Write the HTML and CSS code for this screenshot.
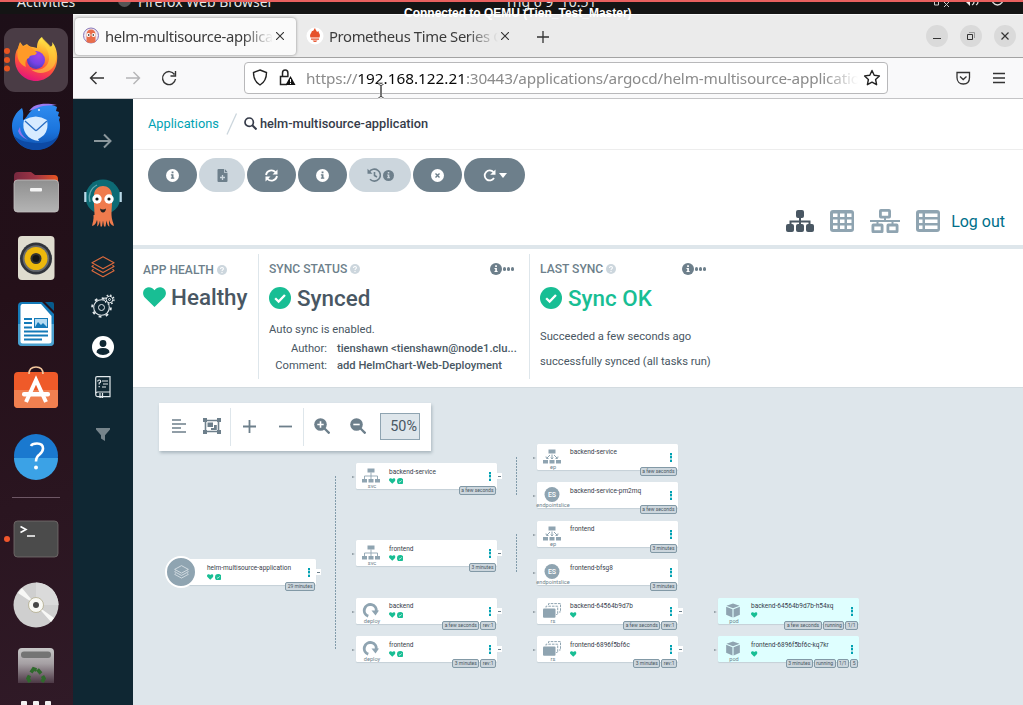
FILE: index.html
```html
<!DOCTYPE html>
<html lang="en">
<head>
<meta charset="utf-8">
<title>helm-multisource-application</title>
<link rel="stylesheet" href="styles.css">
</head>
<body>
<svg class="defs" aria-hidden="true">
  <defs>
    <linearGradient id="gFox" x1=".7" y1="0" x2=".35" y2="1"><stop offset="0" stop-color="#fff44f"/><stop offset=".35" stop-color="#ffa52a"/><stop offset=".65" stop-color="#ff4f3d"/><stop offset="1" stop-color="#e3127e"/></linearGradient>
    <radialGradient id="gGlobe" cx=".65" cy=".25" r=".8"><stop offset="0" stop-color="#a244e8"/><stop offset=".6" stop-color="#7542e5"/><stop offset="1" stop-color="#4a3bb0"/></radialGradient>
    <linearGradient id="gBird" x1="0" y1="0" x2="0" y2="1"><stop offset="0" stop-color="#2f8df0"/><stop offset=".6" stop-color="#1a73dc"/><stop offset="1" stop-color="#0f4ea8"/></linearGradient>
    <linearGradient id="gFolder" x1="0" y1="0" x2="1" y2="0"><stop offset="0" stop-color="#77283f"/><stop offset=".5" stop-color="#a03545"/><stop offset="1" stop-color="#e95420"/></linearGradient>
    <linearGradient id="gGray" x1="0" y1="0" x2="0" y2="1"><stop offset="0" stop-color="#8f8f8f"/><stop offset="1" stop-color="#b4b4b4"/></linearGradient>
    <linearGradient id="gTrash" x1="0" y1="0" x2="0" y2="1"><stop offset="0" stop-color="#c8c8c8"/><stop offset=".45" stop-color="#a59fa3"/><stop offset="1" stop-color="#4c3845"/></linearGradient>
    <symbol id="info" viewBox="0 0 16 16"><circle cx="8" cy="8" r="8" fill="currentColor"/><path d="M6.900 3h2.300v2.200H6.900zM6 6.500h3.200v4h1V12H6v-1.500h1V8H6z"/></symbol>
    <symbol id="help" viewBox="0 0 16 16"><circle cx="8" cy="8" r="8" fill="currentColor"/><path d="M5.700 6.200C5.700 3.300 10.300 3.500 10.300 6.200 10.300 7.700 8 7.800 8 9.500" fill="none" stroke="#fff" stroke-width="1.700"/><circle cx="8" cy="12" r="1.100" fill="#fff"/></symbol>
    <symbol id="check" viewBox="0 0 16 16"><circle cx="8" cy="8" r="8" fill="#18be94"/><path d="M4.500 8.200l2.500 2.400 4.600-4.800" fill="none" stroke="#fff" stroke-width="1.700"/></symbol>
    <symbol id="heart" viewBox="0 0 16 14"><path d="M8 14L1.200 7.300C-.7 5.200-.2 2 1.800.8 4-.6 6.500.3 8 2.200 9.500.3 12-.6 14.200.8c2 1.200 2.500 4.400.6 6.500z" fill="#18be94"/></symbol>
    <symbol id="stack" viewBox="0 0 24 22"><g fill="none" stroke="currentColor" stroke-width="1.200" stroke-linejoin="round"><path d="M12 .8l11 6-11 6-11-6z"/><path d="M2.500 9.200L1 10.500l11 6 11-6-1.500-1.300M2.500 13.200L1 14.700l11 6 11-6-1.500-1.500"/></g></symbol>
    <symbol id="svc" viewBox="0 0 18 14"><path d="M5.500 0h7v4h-7zM0 10.500h5V14H0zM6.500 10.500h5V14h-5zM13 10.500h5V14h-5z" fill="#8fa4b1"/><path d="M9 4v6.500M2.500 10.500V7.500h13v3" fill="none" stroke="#8fa4b1" stroke-width=".9"/></symbol>
    <symbol id="ep" viewBox="0 0 18 14"><path d="M5.500 0h7v4h-7zM0 10.500h5V14H0zM6.500 10.500h5V14h-5zM13 10.500h5V14h-5z" fill="#8fa4b1"/><path d="M9 5v4M7 5.500L4 8.500M11 5.500l3 3M3 7l.5 2h2M15 7l-.5 2h-2M7.800 8L9 9.500 10.200 8" fill="none" stroke="#8fa4b1" stroke-width="1"/></symbol>
    <symbol id="deploy" viewBox="0 0 18 15"><path d="M6.300 13.200A6 6 0 1 1 14.200 8.500" fill="none" stroke="#8fa4b1" stroke-width="2.900"/><path d="M9.500 7.500h7.500l-3.500 5z" fill="#8fa4b1"/></symbol>
    <symbol id="rs" viewBox="0 0 18 15"><rect x="0" y="5.500" width="12.500" height="9.200" rx="1" fill="#8fa4b1"/><path d="M3 4.500V3.200h11.700v8.300h-1.500M5.500 2V.6h12v8.400h-1.500" fill="none" stroke="#8fa4b1" stroke-width="1" stroke-dasharray="2.600 1"/></symbol>
    <symbol id="pod" viewBox="0 0 16 16"><path d="M8 .5l7 2.400L8 5.500 1 2.900zM.7 4l6.700 2.600v8.900L.7 12.600zM15.300 4L8.600 6.600v8.900l6.700-2.900z" fill="#8fa4b1"/></symbol>
    <symbol id="es" viewBox="0 0 16 16"><circle cx="8" cy="8" r="8" fill="#8fa4b1"/><text x="8" y="10.600" text-anchor="middle" font-size="7.500" font-family="Roboto" font-weight="500" fill="#fff">ES</text></symbol>
    <symbol id="argo" viewBox="0 0 38 48"><circle cx="19" cy="18" r="17.500" fill="#0d6b75"/><path d="M6 23A14 14 0 0 1 13 6" fill="none" stroke="#65a7b0" stroke-width="1.300"/><path d="M1.300 13v10M36.700 13v10" stroke="#b9d9e8" stroke-width="2.200"/><path d="M10.500 36c0-7-1-12-.5-20C10.500 4 27.500 4 28 16c.5 8-.5 13-.5 20 0 4 2 8 2.500 11-3-.5-4-3-5-6 0 2 0 4 .5 6.500-2-.5-2.500-3.500-3-6l-1 6h-1.500l-1-6-1 6-1.500 0-.5-6c-.5 2-1 5-3 6 .5-3 .5-5 0-6.500-1 3-2 5.500-5 6 .5-3 2-7 1.500-11z" fill="#ef7b4d"/><circle cx="13" cy="20" r="4.700" fill="#fff"/><circle cx="25" cy="20" r="4.700" fill="#fff"/><circle cx="13" cy="20" r="1.600" fill="#111"/><circle cx="25" cy="20" r="1.600" fill="#111"/><path d="M16 29.500q3 2 6 0-.5 4-3 4t-3-4z" fill="#222"/></symbol>
  </defs>
</svg>

<div class="screen">
  <header class="topbar">
    <span class="topbar-activities">Activities</span>
    <i class="topbar-dot"></i>
    <span class="topbar-app">Firefox Web Browser</span>
    <span class="topbar-clock">Thg 6 9&nbsp;&nbsp;10:51</span>
    <svg class="topbar-tray" viewBox="930 2 80 12"><path d="M934.500 1v4h4V1M944 2l5 5M949 2l-5 5" fill="none" stroke="#ccc"/><path d="M963 2h3l4 4V2z" fill="#eee"/><path d="M972 5q2-1 2-3M976 5q2-1 2-3M992.500 2q5 6 10 0" fill="none" stroke="#ddd" stroke-width="1.300"/></svg>
  </header>
  <div class="vm-banner">Connected to QEMU (Tien_Test_Master)</div>

  <div class="desktop">
    <nav class="dock">
      <svg class="slot" viewBox="4 27 64 66"><rect x="4" y="28" width="64" height="64" rx="11" fill="#4a3c45"/><g fill="#e95420"><circle cx="7" cy="51" r="3"/><circle cx="7" cy="60" r="3"/><circle cx="7" cy="68.500" r="3"/></g>
        <path d="M20 42l3 4 4-2c1 1 3 3 6 3l4 1c0-6 2-9 5-11 1 4 5 5 8 10 2-1 3-2 2-5 4 4 6 12 5 19-1 11-10 20-21 20S15 72 15 60c0-6 1-9 3-12z" fill="url(#gFox)"/><circle cx="36" cy="60" r="9" fill="url(#gGlobe)"/><path d="M20 43l3 4 4-2 6 4 4 4-2 2c-4 0-6 1-6 3-4 1-4 6-3 9-7-3-11-10-7-22z" fill="#ff9a28"/><path d="M42 37.500c0 8 8 12 7 22-1 8-9 12-18 10 8 7 24 3 25-10 1-9-7-15-14-22z" fill="#ffd43d" opacity=".6"/></svg>
      <svg class="slot" viewBox="4 93 64 66"><path d="M22 108c-6 4-10 11-10 18 0 14 10 24 24 24 13 0 24-10 24-23 0-3 0-5-1-7l1-3-2-1 1-4-3-1 1-4c-8-4-20-4-26 4-4 4-5 8-8 9 0-4 1-7-1-12z" fill="url(#gBird)"/><path d="M14 136c4 9 13 14 22 14 10 0 19-5 23-15-5 6-12 8-20 8-11 0-19-2-25-7z" fill="#0d4aa5"/><path d="M24 120q12-7 23 0 2 9-3 15-5 4-6 4l1 2q-9-1-13-7-4-6-2-14z" fill="#d7ebff"/><path d="M25 121l10 9q1 1 2 0l10-9" fill="none" stroke="#2a6fc4" stroke-width="1.300"/><path d="M29 111c4-7 15-9 28-6l-9 .5c-7 0-11 3-19 5.500z" fill="#9c7bf0"/><path d="M20 127q0 8 8 13-8-3-10-9z" fill="#8f74ea"/><circle cx="39" cy="110" r=".9" fill="#fff"/></svg>
      <svg class="slot" viewBox="4 159 64 66"><path d="M14 176q0-4 4-4h13l4 3h19q4 0 4 4v6H14z" fill="url(#gFolder)"/><rect x="14" y="180" width="44.500" height="32" rx="3.500" fill="url(#gGray)" stroke="#c4c0c0" stroke-width=".8"/><rect x="30" y="188" width="12" height="3.500" rx="1" fill="#f4f4f4"/></svg>
      <svg class="slot" viewBox="4 225 64 66"><rect x="18" y="236" width="36.500" height="44" rx="4" fill="#dfdccf"/><circle cx="36" cy="258.500" r="16" fill="#31343b"/><circle cx="36" cy="258.500" r="13.300" fill="#666a70"/><circle cx="36" cy="258.500" r="11.500" fill="#edb80d"/><circle cx="36" cy="258.500" r="5.500" fill="#333"/><circle cx="36" cy="258.500" r="3.500" fill="#151515"/></svg>
      <svg class="slot" viewBox="4 291 64 66"><path d="M22 302h20l12 12v28q0 4-4 4H22q-4 0-4-4v-36q0-4 4-4z" fill="#147ab8"/><path d="M18 324h36v18q0 4-4 4H22q-4 0-4-4z" fill="#4ba1cf"/><path d="M22 304h19l10.500 12v25q0 2.500-2.500 2.500H22.500q-2 0-2-2v-35q0-2 1.500-2.500z" fill="#fff"/><path d="M45 302h7q2 0 2 2v7z" fill="#075a8c"/><path d="M24 319h8M24 323h8M24 327.500h8M24 331.500h24M24 335.500h24M24 339.500h18" stroke="#147ab8" stroke-width="2"/><rect x="34.500" y="318.500" width="13" height="9" fill="#b5dcf2" stroke="#147ab8"/><path d="M35 327l3-5 3 3 2-2 4 4z" fill="#147ab8"/></svg>
      <svg class="slot" viewBox="4 357 64 66"><rect x="14" y="372" width="44" height="36" rx="4" fill="#ef5a29"/><path d="M14 390h44v14q0 4-4 4H18q-4 0-4-4z" fill="#f08050"/><path d="M29 374q0-7 7-7t7 7" fill="none" stroke="#f4c79d" stroke-width="1.700"/><path d="M26 402l10-22 10 22" fill="none" stroke="#fff" stroke-width="4"/><rect x="22" y="392" width="28" height="4.500" rx="2" fill="#fff"/></svg>
      <svg class="slot" viewBox="4 423 64 66"><circle cx="36" cy="456" r="22" fill="#1a79cf"/><path d="M14 458a22 22 0 0 0 44 0z" fill="#3ba2e6"/><path d="M31 446q1-2.500 6-2.500 6 0 6 5 0 3-3.500 6-3.500 2.500-3.500 7" fill="none" stroke="#fff" stroke-width="2.600"/><circle cx="36" cy="467.500" r="2" fill="#fff"/></svg>
      <hr class="dock-divider">
      <svg class="slot" viewBox="4 506 64 66"><circle cx="7" cy="539" r="3" fill="#f0562c"/><rect x="14" y="521" width="44" height="36" rx="3.500" fill="#4b4b4b" stroke="#77706f" stroke-width=".8"/><path d="M20.500 526.500l5.500 3-5.500 3M27 536h8" fill="none" stroke="#fff" stroke-width="1.600"/></svg>
      <svg class="slot" viewBox="4 572 64 66"><circle cx="36" cy="605" r="22.500" fill="#cfcfcf"/><path d="M36 605V582.500a22.500 22.500 0 0 1 22.500 22.500z" fill="#dadada"/><path d="M36 605l-18-12 4-5zM36 605l18 13-3 4z" fill="#f8f8f6"/><circle cx="36" cy="605" r="7.500" fill="#f8f8f4" stroke="#aaa380" stroke-width=".7"/><circle cx="36" cy="605" r="3" fill="#464646"/></svg>
      <svg class="slot slot-trash" viewBox="4 638 64 63"><path d="M18 683v-31q0-4 4-4h28q4 0 4 4v31z" fill="url(#gTrash)"/><rect x="21" y="651.500" width="30" height="6.500" rx="3" fill="#747474"/><g fill="none" stroke="#2f6a2c" stroke-width="3.600"><path d="M31 672.500l2.500-3.500 3 1M37.500 669.500l3.500 4M29.500 675.500l-1.500 3 2 3.500M42.500 676l1.500 2.500-2 3.500"/></g></svg>
      <div class="dock-apps"><i></i><i></i><i></i></div>
    </nav>

    <main class="browser">
      <div class="tabs">
        <div class="tab tab-active">
          <svg class="favicon" viewBox="0 0 18 18"><circle cx="9" cy="8.500" r="7.500" fill="#eee7f2" stroke="#8a78b8"/><path d="M4.500 15V8q0-5.500 4.500-5.500T13.500 8v7q-4.500 2-9 0z" fill="#e96d4b"/><circle cx="6.500" cy="8" r="2" fill="#fff"/><circle cx="11.500" cy="8" r="2" fill="#fff"/><circle cx="6.700" cy="8" r=".8"/><circle cx="11.300" cy="8" r=".8"/></svg>
          <span class="tab-title">helm-multisource-application</span>
          <svg class="tab-close" viewBox="0 0 8 8"><path d="M0 0l8 8M8 0L0 8" stroke="#333" stroke-width="1.100"/></svg>
        </div>
        <div class="tab tab-idle">
          <svg class="favicon" viewBox="0 0 18 18"><circle cx="9" cy="9" r="8.500" fill="#fff"/><path d="M4.500 10.500C3 7 6 6 5.800 4 8 4.500 7.500 2.500 9 1c.5 2 1.500 2.500 2 4l1.500-1c0 2.500 2.500 3 1 6.500zM5 11.500h8v1.300H5zM6.500 13.500h5q-2.500 3-5 0z" fill="#e6522c"/></svg>
          <span class="tab-title">Prometheus Time Series Collection</span>
          <svg class="tab-close" viewBox="0 0 8 8"><path d="M0 0l8 8M8 0L0 8" stroke="#333" stroke-width="1.100"/></svg>
        </div>
        <svg class="tab-new" viewBox="0 0 12 12"><path d="M6 0v12M0 6h12" stroke="#333" stroke-width="1.300"/></svg>
        <div class="window-buttons">
          <svg viewBox="0 0 22 22"><circle cx="11" cy="11" r="11" fill="#dadada"/><path d="M7 13.500h8" stroke="#333"/></svg>
          <svg viewBox="0 0 22 22"><circle cx="11" cy="11" r="11" fill="#dadada"/><path d="M7.500 9.500h5v5h-5z" fill="none" stroke="#333"/><path d="M9 7.500h5.500V13" fill="none" stroke="#999"/></svg>
          <svg viewBox="0 0 22 22"><circle cx="11" cy="11" r="11" fill="#dadada"/><path d="M7.500 7.500l7 7M14.500 7.500l-7 7" stroke="#333" stroke-width="1.200"/></svg>
        </div>
      </div>

      <div class="navbar">
        <svg class="nav-icons" viewBox="88 70 92 18"><g fill="none" stroke="#333" stroke-width="1.400"><path d="M104 79H91M96.500 73L90.500 79l6 6"/><path d="M126 79h13M133.500 73l6 6-6 6" stroke="#b4b4b6"/><path d="M174.500 75.500a6.500 6.500 0 1 0 1 4.500M175.500 72v5h-5"/></g></svg>
        <div class="urlbar">
          <svg class="url-icons" viewBox="252 69 46 20"><path d="M260 71l6.500 2.500c0 6-1.500 9.500-6.500 12.500-5-3-6.500-6.500-6.500-12.500z" fill="none" stroke="#222" stroke-width="1.400"/><path d="M287 85.500h-6.500v-8h8M282.500 77.500V74q0-3 2.700-3t2.700 3v3.500" fill="none" stroke="#222" stroke-width="1.500"/><path d="M290.500 77l5 9h-10z" fill="#111"/><path d="M290.500 80v3.200M290.500 84v1" stroke="#fff"/></svg>
          <span class="url">https://<b>192.168.122.21</b>:30443/applications/argocd/helm-multisource-applications</span>
          <svg class="url-star" viewBox="0 0 18 18"><path d="M9 1.500l2.200 4.800 5.200.6-3.800 3.600 1 5.200L9 13.200l-4.600 2.500 1-5.200L1.600 6.900l5.200-.6z" fill="none" stroke="#222" stroke-width="1.400" stroke-linejoin="round"/></svg>
        </div>
        <svg class="nav-right" viewBox="955 70 52 16"><g fill="none" stroke="#333" stroke-width="1.300"><path d="M957 72.500h12.500v5c0 4-2.500 6.500-6.200 6.500s-6.300-2.500-6.300-6.500z"/><path d="M960 76.500l3.200 3 3.300-3M993 73.500h12M993 78h12M993 82.500h12"/></g></svg>
      </div>

      <div class="app">
        <aside class="sidebar">
          <svg class="side-arrow" viewBox="0 0 20 16"><path d="M1 8h16M11 1.500L17.500 8 11 14.500" fill="none" stroke="#8b979c" stroke-width="2"/></svg>
          <svg class="side-logo"><use href="#argo"/></svg>
          <svg class="side-icon side-apps"><use href="#stack"/></svg>
          <svg class="side-icon side-gear" viewBox="0 0 24 24"><g fill="none" stroke="#e3e9ec"><circle cx="10.500" cy="13.500" r="7.800" stroke-width="1.100"/><circle cx="10.500" cy="13.500" r="3"/><circle cx="10.500" cy="13.500" r="9.300" stroke-width="2" stroke-dasharray="2.800 4.500"/><circle cx="18.500" cy="5.500" r="4.800" fill="#0f2733" stroke="none"/><circle cx="18.500" cy="5.500" r="3.300"/><circle cx="18.500" cy="5.500" r="1"/><circle cx="18.500" cy="5.500" r="4.500" stroke-width="1.300" stroke-dasharray="1.700 1.830"/></g></svg>
          <svg class="side-icon side-user" viewBox="0 0 22 22"><circle cx="11" cy="11" r="11" fill="#fff"/><circle cx="11" cy="7.500" r="3.400" fill="#0f2733"/><path d="M4.500 16.500q0-4.500 6.500-4.500t6.500 4.500q-6.500 5-13 0z" fill="#0f2733"/></svg>
          <svg class="side-icon side-docs" viewBox="0 0 16 22"><g fill="none" stroke="#e3e9ec" stroke-width="1.200"><path d="M.7 18V2Q.7.700 2 .700h13v20H3q-2.300 0-2.300-2.400T3 16h12"/><path d="M2.700 5.500q0-1.500 1.500-1.500T5.700 5.500Q5.700 6.500 4.200 7v1.500M4.200 10v1.200M7 5h6M8 8h5M7 11h4M5 17v4.500l1.300-1 1.200 1V17"/></g></svg>
          <svg class="side-icon side-filter" viewBox="0 0 14 13"><path d="M0 0h14v1.500L9 7.300V13l-4-2.500V7.300L0 1.500z" fill="#76848b"/></svg>
        </aside>

        <section class="content">
          <div class="breadcrumb">
            <a>Applications</a>
            <svg class="crumb-slash" viewBox="0 0 12 22"><path d="M1 21.500L10.500.5" stroke="#ccd6dd" stroke-width="1.300"/></svg>
            <svg class="crumb-search" viewBox="0 0 13 13"><circle cx="5.200" cy="5.200" r="4.200" fill="none" stroke="#363c4a" stroke-width="1.700"/><path d="M8.300 8.300l4.200 4.200" stroke="#363c4a" stroke-width="2"/></svg>
            <span>helm-multisource-application</span>
          </div>

          <div class="actions">
            <button class="pill"><svg class="i13"><use href="#info"/></svg></button>
            <button class="pill pill-off pill-file"><svg class="i13" viewBox="0 0 13 13"><path d="M1.500 1q0-1 1-1H8v3.700h3.500V12q0 1-1 1h-8q-1 0-1-1zM8.800 0l2.700 2.900H8.800z" fill="currentColor"/><path d="M4 8.500h5M6.500 6v5" stroke="#ccd6dd" stroke-width="1.300"/></svg></button>
            <button class="pill"><svg class="i13" viewBox="0 0 13 13"><path d="M1 6A5.500 5.500 0 0 1 10.500 3.200M12 7a5.500 5.500 0 0 1-9.500 2.800" fill="none" stroke="#fff" stroke-width="1.800"/><path d="M12.500.5v5h-5zM.5 12.500v-5h5z" fill="#fff"/></svg></button>
            <button class="pill"><svg class="i13"><use href="#info"/></svg></button>
            <button class="pill pill-off pill-history"><svg class="i14" viewBox="0 0 14 14"><path d="M2.200 4A6 6 0 1 1 3 11.300M7.500 4v3.500l2.500 1.500" fill="none" stroke="currentColor" stroke-width="1.600"/><path d="M.5.8v5h5z" fill="currentColor"/></svg><svg class="i11"><use href="#info"/></svg></button>
            <button class="pill"><svg class="i13" viewBox="0 0 13 13"><circle cx="6.500" cy="6.500" r="6.500" fill="#fff"/><path d="M4.500 4.500l4 4M8.500 4.500l-4 4" stroke="#6d7f8b" stroke-width="1.400"/></svg></button>
            <button class="pill pill-refresh"><svg class="i13" viewBox="0 0 13 13"><path d="M10.500 3.200A5 5 0 1 0 11 9" fill="none" stroke="#fff" stroke-width="1.800"/><path d="M12.500.5v5.300H7.200z" fill="#fff"/></svg><i class="caret"></i></button>
          </div>

          <div class="views">
            <svg class="view-tree" viewBox="0 0 28 22"><g fill="#495763"><rect x="10" width="8" height="8" rx="2"/><rect x="0" y="14" width="8" height="8" rx="2"/><rect x="10" y="14" width="8" height="8" rx="2"/><rect x="20" y="14" width="8" height="8" rx="2"/></g><path d="M14 8v6M4.500 14v-2.500h19V14" fill="none" stroke="#495763" stroke-width="2"/></svg>
            <svg class="view-grid" viewBox="0 0 24 22"><rect width="24" height="22" rx="3" fill="#8fa4b1"/><path d="M3 3.500h4.500v3.500H3zM10 3.500h4.500v3.500H10zM17 3.500h4.500v3.500H17zM3 9.500h4.500v3.500H3zM10 9.500h4.500v3.500H10zM17 9.500h4.500v3.500H17zM3 15.500h4.500v3.500H3zM10 15.500h4.500v3.500H10zM17 15.500h4.500v3.500H17z" fill="#fff"/></svg>
            <svg class="view-net" viewBox="0 0 30 24"><g fill="none" stroke="#8fa4b1" stroke-width="2.800"><rect x="10.400" y="1.400" width="9.200" height="6.700" rx=".5"/><rect x="2.900" y="16" width="9.200" height="6.700" rx=".5"/><rect x="17.900" y="16" width="9.200" height="6.700" rx=".5"/></g><path d="M0 12h30M15 8v4M7.500 12v4M22.500 12v4" stroke="#8fa4b1" stroke-width="2"/></svg>
            <svg class="view-list" viewBox="0 0 24 22"><rect width="24" height="22" rx="3" fill="#8fa4b1"/><path d="M3 3.500h3.500v3.500H3zM9 3.500h12.500v3.500H9zM3 9.500h3.500v3.500H3zM9 9.500h12.500v3.500H9zM3 15.500h3.500v3.500H3zM9 15.500h12.500v3.500H9z" fill="#fff"/></svg>
            <a class="logout">Log out</a>
          </div>

          <div class="status">
            <div class="status-col status-health">
              <h6>APP HEALTH <svg class="i10"><use href="#help"/></svg></h6>
              <div class="big"><svg class="big-heart"><use href="#heart"/></svg><span>Healthy</span></div>
            </div>
            <div class="status-col status-sync">
              <h6>SYNC STATUS <svg class="i10"><use href="#help"/></svg><span class="more"><svg class="i12"><use href="#info"/></svg><i></i><i></i><i></i></span></h6>
              <div class="big"><svg class="big-check"><use href="#check"/></svg><span>Synced</span></div>
              <p class="auto">Auto sync is enabled.</p>
              <dl><dt>Author:</dt><dd>tienshawn &lt;tienshawn@node1.clu...</dd><dt>Comment:</dt><dd>add HelmChart-Web-Deployment</dd></dl>
            </div>
            <div class="status-col status-last">
              <h6>LAST SYNC <svg class="i10"><use href="#help"/></svg><span class="more"><svg class="i12"><use href="#info"/></svg><i></i><i></i><i></i></span></h6>
              <div class="big big-ok"><svg class="big-check"><use href="#check"/></svg><span>Sync OK</span></div>
              <p class="when">Succeeded a few seconds ago</p>
              <p class="msg">successfully synced (all tasks run)</p>
            </div>
          </div>

          <div class="graph">
            <div class="graph-tools">
              <div class="tool-group tool-layout">
                <svg class="i14" viewBox="0 0 14 14"><path d="M0 1h9M0 5h14M0 9h9M0 13h14" stroke="#6d7f8b" stroke-width="1.700"/></svg>
                <svg class="tool-fit" viewBox="0 0 18 16"><path d="M2.500 2.500h13v11h-13z" fill="none" stroke="#6d7f8b" stroke-width="1.600"/><path d="M0 0h4v4H0zM14 0h4v4h-4zM0 12h4v4H0zM14 12h4v4h-4zM4.500 4.500H10V9H4.500zM11 7h2.800v5H8v-2h3z" fill="#6d7f8b"/></svg>
              </div>
              <div class="tool-group tool-step">
                <svg class="i13" viewBox="0 0 13 13"><path d="M6.500 0v13M0 6.500h13" stroke="#6d7f8b" stroke-width="1.800"/></svg>
                <svg class="i13" viewBox="0 0 13 13"><path d="M0 6.500h13" stroke="#6d7f8b" stroke-width="1.800"/></svg>
              </div>
              <div class="tool-group tool-zoom">
                <svg class="i16" viewBox="0 0 16 16"><circle cx="6.500" cy="6.500" r="6.300" fill="#6d7f8b"/><path d="M10.500 10.500l5 5" stroke="#6d7f8b" stroke-width="2.300"/><path d="M3.300 6.500h6.400M6.500 3.300v6.400" stroke="#fff" stroke-width="1.600"/></svg>
                <svg class="i16" viewBox="0 0 16 16"><circle cx="6.500" cy="6.500" r="6.300" fill="#6d7f8b"/><path d="M10.500 10.500l5 5" stroke="#6d7f8b" stroke-width="2.300"/><path d="M3.300 6.500h6.400" stroke="#fff" stroke-width="1.600"/></svg>
                <span class="zoom-value">50%</span>
              </div>
            </div>

            <i class="wire wire-root"></i><i class="wire wire-backend"></i><i class="wire wire-frontend"></i>

            <div class="node node-root has-children">
              <div class="root-badge"><svg><use href="#stack"/></svg></div>
              <div class="node-text"><b>helm-multisource-application</b><span><svg class="h"><use href="#heart"/></svg><svg class="c"><use href="#check"/></svg></span></div>
              <div class="kebab"></div><div class="tags"><em>29 minutes</em></div>
            </div>

            <div class="node col-1 row-2 child has-children"><div class="kind"><svg><use href="#svc"/></svg><small>svc</small></div><div class="node-text"><b>backend-service</b><span><svg class="h"><use href="#heart"/></svg><svg class="c"><use href="#check"/></svg></span></div><div class="kebab"></div><div class="tags"><em>a few seconds</em></div></div>
            <div class="node col-1 row-5 child has-children"><div class="kind"><svg><use href="#svc"/></svg><small>svc</small></div><div class="node-text"><b>frontend</b><span><svg class="h"><use href="#heart"/></svg><svg class="c"><use href="#check"/></svg></span></div><div class="kebab"></div><div class="tags"><em>3 minutes</em></div></div>
            <div class="node col-1 row-7 child has-children"><div class="kind"><svg><use href="#deploy"/></svg><small>deploy</small></div><div class="node-text"><b>backend</b><span><svg class="h"><use href="#heart"/></svg><svg class="c"><use href="#check"/></svg></span></div><div class="kebab"></div><div class="tags"><em>a few seconds</em><em>rev:1</em></div></div>
            <div class="node col-1 row-8 child has-children"><div class="kind"><svg><use href="#deploy"/></svg><small>deploy</small></div><div class="node-text"><b>frontend</b><span><svg class="h"><use href="#heart"/></svg><svg class="c"><use href="#check"/></svg></span></div><div class="kebab"></div><div class="tags"><em>3 minutes</em><em>rev:1</em></div></div>

            <div class="node col-2 row-1 child"><div class="kind"><svg><use href="#ep"/></svg><small>ep</small></div><div class="node-text"><b>backend-service</b></div><div class="kebab"></div><div class="tags"><em>a few seconds</em></div></div>
            <div class="node col-2 row-3 child"><div class="kind"><svg><use href="#es"/></svg><small>endpointslice</small></div><div class="node-text"><b>backend-service-pm2mq</b></div><div class="kebab"></div><div class="tags"><em>a few seconds</em></div></div>
            <div class="node col-2 row-4 child"><div class="kind"><svg><use href="#ep"/></svg><small>ep</small></div><div class="node-text"><b>frontend</b></div><div class="kebab"></div><div class="tags"><em>3 minutes</em></div></div>
            <div class="node col-2 row-6 child"><div class="kind"><svg><use href="#es"/></svg><small>endpointslice</small></div><div class="node-text"><b>frontend-bfsg8</b></div><div class="kebab"></div><div class="tags"><em>3 minutes</em></div></div>
            <div class="node col-2 row-7 child has-children"><div class="kind"><svg><use href="#rs"/></svg><small>rs</small></div><div class="node-text"><b>backend-64564b9d7b</b><span><svg class="h"><use href="#heart"/></svg></span></div><div class="kebab"></div><div class="tags"><em>a few seconds</em><em>rev:1</em></div></div>
            <div class="node col-2 row-8 child has-children"><div class="kind"><svg><use href="#rs"/></svg><small>rs</small></div><div class="node-text"><b>frontend-6896f5bf6c</b><span><svg class="h"><use href="#heart"/></svg></span></div><div class="kebab"></div><div class="tags"><em>3 minutes</em><em>rev:1</em></div></div>

            <div class="node node-pod col-3 row-7 child"><div class="kind"><svg><use href="#pod"/></svg><small>pod</small></div><div class="node-text"><b>backend-64564b9d7b-h54xq</b><span><svg class="h"><use href="#heart"/></svg></span></div><div class="kebab"></div><div class="tags"><em>a few seconds</em><em>running</em><em>1/1</em></div></div>
            <div class="node node-pod col-3 row-8 child"><div class="kind"><svg><use href="#pod"/></svg><small>pod</small></div><div class="node-text"><b>frontend-6896f5bf6c-kq7kr</b><span><svg class="h"><use href="#heart"/></svg></span></div><div class="kebab"></div><div class="tags"><em>3 minutes</em><em>running</em><em>1/1</em><em>5</em></div></div>
          </div>
        </section>
      </div>
    </main>
  </div>
  <svg class="cursor" viewBox="0 0 8 16"><path d="M1.500 1.500q2.500 0 2.500 2v9q0 2-2.500 2M6.500 1.500Q4 1.500 4 3.500v9q0 2 2.500 2" fill="none" stroke="#fff" stroke-width="2.400"/><path d="M1.500 1.500q2.500 0 2.500 2v9q0 2-2.500 2M6.500 1.500Q4 1.500 4 3.500v9q0 2 2.500 2" fill="none" stroke="#444"/></svg>
</div>
</body>
</html>
```
FILE: styles.css
```css
* { box-sizing: border-box; }
body { margin: 0; font-family: Roboto, "Liberation Sans", sans-serif; }
svg { display: block; flex: none; }
p, h6, dl, dd { margin: 0; }
.defs { position: absolute; width: 0; height: 0; }
.screen { position: relative; width: 1023px; height: 705px; overflow: hidden; display: flex; flex-direction: column; }

/* System bar */
.topbar { height: 14px; flex: none; border-top: 2px solid #e9605f; background: #141414; color: #e6e6e6; overflow: hidden; display: flex; align-items: flex-start; font: 14px/16px "Noto Sans", sans-serif; padding-left: 17px; }
.topbar span, .topbar-dot { margin-top: -8px; white-space: nowrap; }
.topbar-activities { width: 101px; }
.topbar-dot { width: 13px; height: 13px; border-radius: 50%; background: #555; margin-right: 7px; }
.topbar-app { width: 367px; }
.topbar-clock { width: 425px; }
.topbar-tray { width: 80px; height: 12px; }
.vm-banner { position: absolute; z-index: 3; left: 404px; top: 6px; color: #fff; font: bold 12px/14px "Liberation Sans", sans-serif; white-space: nowrap; }

.desktop { flex: 1; display: flex; min-height: 0; }

/* Dock */
.dock { width: 73px; flex: none; padding: 13px 5px 0 4px; background: linear-gradient(165deg, #1d0f18, #241019 40%, #301a27); }
.slot { width: 64px; height: 66px; }
.slot-trash { height: 63px; }
.dock-divider { height: 1px; margin: 8px 8px; border: 0; background: #6e5765; }
.dock-apps { display: flex; gap: 6px; padding-left: 17px; }
.dock-apps i { width: 6px; height: 6px; background: #f4f2f2; border-radius: 1px; }

/* Browser chrome */
.browser { flex: 1; min-width: 0; display: flex; flex-direction: column; background: #fff; }
.tabs { height: 44px; flex: none; display: flex; align-items: flex-start; background: #ebebeb; border-top: 1px solid #fafafa; border-bottom: 1px solid #a3a3a3; }
.tab { height: 37px; margin-top: 3px; display: flex; align-items: center; color: #3c3c3c; font: 14.800px/20px "Noto Sans", sans-serif; letter-spacing: -.36px; }
.tab-active { width: 221px; margin-left: 2px; padding: 0 12px 0 7px; background: #fafafa; border-radius: 4px; box-shadow: 0 0 3px #888; }
.tab-idle { width: 224px; padding: 0 11px 0 10px; }
.favicon { width: 18px; height: 18px; margin-top: -2px; }
.tab-title { flex: 1; margin: -2px 3px 0 5px; overflow: hidden; white-space: nowrap; mask-image: linear-gradient(90deg, #000 82%, transparent); }
.tab-close { width: 8px; height: 8px; margin: -2px 0 0; }
.tab-new { width: 12px; height: 12px; margin: 16px 0 0 17px; }
.window-buttons { margin: 10px 7px 0 auto; display: flex; gap: 12px; }
.window-buttons svg { width: 22px; height: 22px; }
.navbar { height: 41px; flex: none; display: flex; align-items: center; background: #f9f9fa; border-bottom: 1px solid #c4c4c6; padding-left: 15px; }
.nav-icons { width: 92px; height: 18px; margin-right: 64px; }
.urlbar { width: 644px; height: 32px; display: flex; align-items: center; background: #fff; border: 1px solid #b8b8ba; border-radius: 4px; padding-left: 7px; font: 15.300px/22px "Noto Sans", sans-serif; color: #8b8b8b; }
.url-icons { width: 46px; height: 20px; margin-right: 8px; }
.url { width: 552px; overflow: hidden; white-space: nowrap; letter-spacing: -.17px; mask-image: linear-gradient(90deg, #000 94%, transparent); }
.url b { font-weight: 400; color: #080808; letter-spacing: 0; }
.url-star { width: 18px; height: 18px; margin-left: 5px; }
.nav-right { width: 52px; height: 16px; margin-left: 67px; }
.cursor { position: absolute; left: 377px; top: 83px; width: 8px; height: 16px; z-index: 3; }

/* Argo sidebar */
.app { flex: 1; min-height: 0; display: flex; }
.sidebar { width: 60px; flex: none; background: #0f2733; display: flex; flex-direction: column; align-items: center; }
.side-arrow { width: 20px; height: 16px; margin-top: 34px; }
.side-logo { width: 38px; height: 48px; margin-top: 30px; }
.side-apps { width: 24px; height: 22px; color: #dc6a3d; margin-top: 29px; }
.side-gear { width: 24px; height: 24px; margin-top: 16px; }
.side-user { width: 22px; height: 22px; margin-top: 18px; }
.side-docs { width: 16px; height: 22px; margin-top: 18px; }
.side-filter { width: 14px; height: 13px; margin-top: 30px; }

.content { flex: 1; min-width: 0; display: flex; flex-direction: column; }
.breadcrumb { height: 51px; flex: none; display: flex; align-items: center; padding: 0 0 2px 15px; border-bottom: 1px solid #ededed; font-size: 12.800px; font-weight: 500; color: #363c4a; }
.breadcrumb a { color: #00a2b3; font-weight: 400; }
.crumb-slash { width: 12px; height: 22px; margin: 2px 6px 0 7px; }
.crumb-search { width: 13px; height: 13px; margin-right: 3px; }

.actions { height: 51px; flex: none; padding: 8px 15px; display: flex; gap: 2px; }
.pill { width: 49px; height: 34px; padding: 0; border: 0; border-radius: 17px; background: #6d7f8b; color: #fff; display: flex; align-items: center; justify-content: center; }
.pill .i13 { fill: #6d7f8b; }
.pill-off { background: #ccd6dd; color: #6d7f8b; fill: #ccd6dd; }
.pill-file { width: 46px; }
.pill-history { width: 62px; gap: 2px; }
.pill-refresh { width: 61px; gap: 3px; }
.caret { border: 4.500px solid transparent; border-top: 5px solid #fff; border-bottom: 0; }
.i10 { width: 10px; height: 10px; }
.i11 { width: 11px; height: 11px; }
.i12 { width: 12px; height: 12px; fill: #fff; }
.i13 { width: 13px; height: 13px; }
.i14 { width: 14px; height: 14px; }
.i16 { width: 16px; height: 16px; }

.views { height: 48px; flex: none; display: flex; align-items: center; justify-content: flex-end; padding: 0 18px 4px 0; border-bottom: 4px solid #dee6eb; }
.view-tree { width: 28px; height: 22px; margin-right: 16px; }
.view-grid { width: 24px; height: 22px; margin-right: 16px; }
.view-net { width: 30px; height: 24px; margin-right: 16px; }
.view-list { width: 24px; height: 22px; margin-right: 11px; }
.logout { font-size: 16px; color: #006f8a; }

/* Status panel */
.status { height: 139px; flex: none; display: flex; padding: 5px 0 8px; background: #fff; border-bottom: 1px solid #d3dbe0; color: #495763; font-size: 11.200px; }
.status-col { padding: 8px 10px 0; border-right: 1px solid #dee6eb; }
.status-health { width: 126px; padding-top: 9px; }
.status-sync { width: 271px; }
.status-last { width: 240px; border-right: 0; }
.status h6 { height: 14px; display: flex; align-items: center; gap: 3px; font-size: 12.100px; font-weight: 500; color: #6d7f8b; white-space: nowrap; }
.status h6 > .i10 { color: #ccd6dd; }
.more { margin-left: auto; display: flex; align-items: center; gap: .8px; color: #6d7f8b; }
.status-sync .more { margin-right: 5px; }
.status-last .more { margin-right: 54px; }
.more i { width: 3.200px; height: 3.200px; border-radius: 50%; background: #6d7f8b; }
.big { height: 34px; margin-top: 5px; display: flex; align-items: center; gap: 6px; font-size: 22.400px; font-weight: 500; color: #495763; }
.status-health .big { margin-top: 3px; height: 33px; gap: 5px; }
.big-ok { color: #18be94; }
.big-heart { width: 23px; height: 20px; }
.big-check { width: 22px; height: 22px; }
.auto { margin-top: 6px; line-height: 17px; }
.status-health + .status-sync dl { margin-top: 2px; }
dl { display: grid; grid-template-columns: 58px 1fr; column-gap: 10px; line-height: 17px; white-space: nowrap; }
dt { text-align: right; }
dd { font-weight: 500; }
.when { margin-top: 13px; line-height: 17px; }
.msg { margin-top: 8px; line-height: 17px; }

/* Resource graph */
.graph { position: relative; flex: 1; background: #dee6eb; overflow: hidden; }
.graph-tools { position: absolute; left: 26px; top: 15px; width: 272px; height: 48px; padding: 5px 0; display: flex; background: #fff; box-shadow: 1px 2px 3px #a9b6be; }
.tool-group { display: flex; align-items: center; padding-bottom: 2px; }
.tool-layout { width: 72px; padding-left: 13px; gap: 17px; border-right: 1px solid #dee6eb; }
.tool-fit { width: 18px; height: 16px; }
.tool-step { width: 73px; padding-left: 12px; gap: 23px; border-right: 1px solid #dee6eb; }
.tool-zoom { padding-left: 10px; gap: 20px; }
.zoom-value { width: 40px; height: 27px; margin-left: -6px; padding-right: 2px; border: 1px solid #8fa4b1; background: #dee6eb; font-size: 14.400px; line-height: 25px; text-align: right; color: #495763; }

.wire { position: absolute; width: 1px; background: repeating-linear-gradient(#819baa 0 2px, transparent 2px 3px); }
.wire-root { left: 202px; top: 88px; height: 173px; }
.wire-backend { left: 383px; top: 69px; height: 39px; }
.wire-frontend { left: 383px; top: 146px; height: 39px; }

.node { position: absolute; width: 141px; height: 26px; display: flex; background: #fff; border-radius: 1.500px; box-shadow: 0 1px 1px #c5d0d7; color: #363c4a; }
.node-root { left: 49px; top: 171px; width: 134px; }
.node-pod { background: #dfffff; }
.col-1 { left: 223px; }
.col-2 { left: 404px; }
.col-3 { left: 585px; }
.row-1 { top: 56px; }
.row-2 { top: 75px; }
.row-3 { top: 94px; }
.row-4 { top: 133px; }
.row-5 { top: 152px; }
.row-6 { top: 171px; }
.row-7 { top: 210px; }
.row-8 { top: 248px; }
.kind { width: 33px; padding: 5px 3px 0 0; display: flex; flex-direction: column; align-items: center; color: #6d7f8b; }
.kind svg { width: 18px; height: 15px; }
.kind small { font-size: 5.600px; line-height: 6px; white-space: nowrap; padding-left: 2px; }
.root-badge { width: 32px; height: 32px; margin: -3px 10px 0 -17px; flex: none; display: grid; place-items: center; border: 2px solid #fff; border-radius: 50%; background: #8fa4b1; color: #e5ebef; }
.root-badge svg { width: 15px; height: 14px; }
.node-text { flex: 1; padding-top: 4px; white-space: nowrap; }
.row-2 .node-text, .row-3 .node-text, .row-5 .node-text, .row-6 .node-text, .row-8 .node-text, .node-root .node-text { padding-top: 5px; }
.node-text b { display: block; font-size: 6.500px; line-height: 9px; font-weight: 400; }
.node-text span { display: flex; gap: 1px; margin-top: .5px; }
.h { width: 6.500px; height: 6px; }
.c { width: 6.500px; height: 6.500px; }
.kebab { width: 2px; height: 9px; margin: 9px 6px 0 0; background: repeating-linear-gradient(#00a2b3 0 2px, #9fdbe1 2px 3.300px); }
.tags { position: absolute; right: 1px; top: 23px; display: flex; gap: 1px; }
.tags em { height: 9px; padding: 0 1.500px; border: 1px solid #8299a6; border-radius: 2px; background: #ccd6dd; font: 5px/7px Roboto, sans-serif; color: #495763; white-space: nowrap; }
.has-children::after { content: ""; position: absolute; left: 100%; top: 10px; width: 5px; height: 6px; background: linear-gradient(#6d7f8b, #6d7f8b) 1px 3px / 3px 1px no-repeat #fff; }
.child::before { content: ""; position: absolute; left: -4px; top: 13px; border: 1.500px solid transparent; border-left: 3px solid #8a969d; border-right: 0; }
```
